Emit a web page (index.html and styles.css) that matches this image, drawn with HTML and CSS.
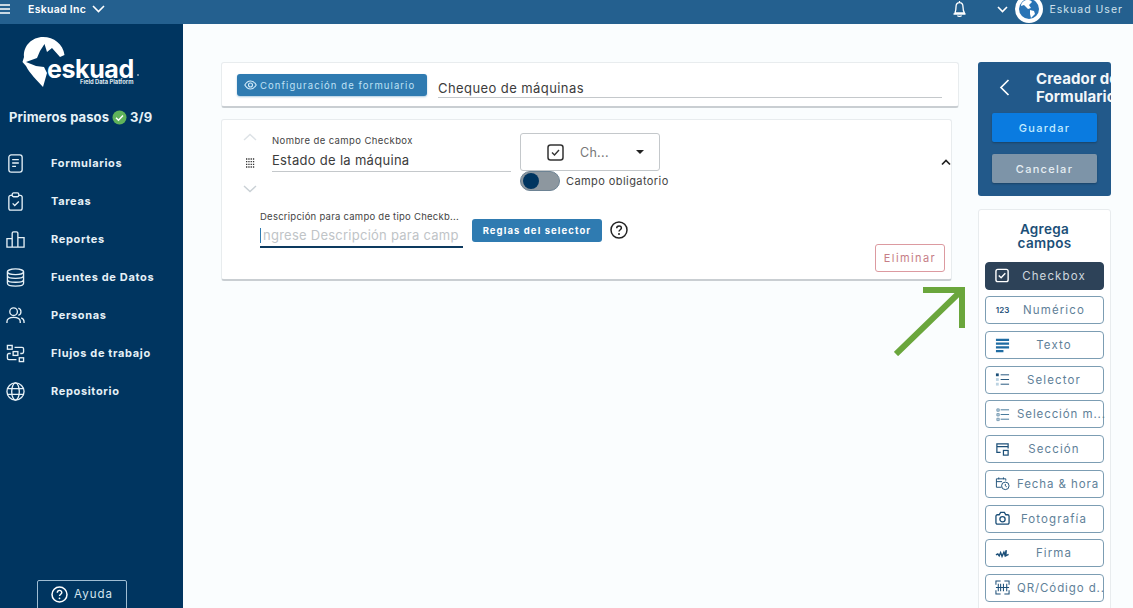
FILE: index.html
```html
<!DOCTYPE html>
<html lang="es">
<head>
    <meta charset="UTF-8">
    <title>Eskuad - Creador de Formularios</title>
    <link rel="stylesheet" href="styles.css">
</head>
<body>

    <header class="topbar">
        <svg class="hamburger" width="11" height="10" viewBox="0 0 11 10"><path d="M0 1h10M0 5h10M0 9h10" stroke="#fff" stroke-width="1.4"/></svg>
        <span class="org-name">Eskuad Inc</span>
        <svg class="org-caret" width="13" height="8" viewBox="0 0 13 8"><path d="M1 1l5.5 5.5L12 1" fill="none" stroke="#fff" stroke-width="1.6"/></svg>
        <svg class="bell" width="17" height="18" viewBox="0 0 17 18"><path d="M8.5 1v1.5M4 13c.5-1.5 1-3 1-6 0-2.5 1.5-4.3 3.5-4.3S12 4.5 12 7c0 3 .5 4.5 1.5 6zM2.5 14h12M6.5 15.5c.5 1.3 3.500 1.3 4 0" fill="none" stroke="#fff" stroke-width="1.3"/></svg>
        <svg class="user-caret" width="11" height="7" viewBox="0 0 11 7"><path d="M1 1l4.5 4.5L10 1" fill="none" stroke="#fff" stroke-width="1.6"/></svg>
        <svg class="avatar" width="28" height="28" viewBox="0 0 28 28">
            <circle cx="14" cy="14" r="14" fill="#fff"/>
            <circle cx="14" cy="14" r="10" fill="#2a74b5"/>
            <path d="M9 6c3-2 7-1 8 1l-3 3 2 3-3 1-4-4-3 1c0-2 1-4 3-5zM15 15l4 1 1 3-4 4-1-4z" fill="#fff"/>
        </svg>
        <span class="user-name">Eskuad User</span>
    </header>

    <div class="layout">
        <aside class="sidebar">
            <svg class="logo" width="150" height="64" viewBox="0 0 150 64">
                <path d="M43 13C54 13 63 20 64.5 31L60 33 52 24 47 28 44.500 20 40 27 37 34 26 38 36 42 44 43 47 49 43 63C37 56 30 50 26 42L22.500 38 24 33C23 22 32 13 43 13z" fill="#fff"/>
                <text class="logo-word" x="47" y="54">eskuad</text>
                <text class="logo-tag" x="80" y="60">Field Data Platform</text>
                <circle cx="138" cy="51" r=".8" fill="#fff"/>
            </svg>

            <div class="first-steps">
                Primeros pasos
                <svg width="15" height="15" viewBox="0 0 15 15"><circle cx="7.5" cy="7.5" r="7" fill="#5fb35a"/><path d="M4 7.8l2.500 2.4L11 5.5" fill="none" stroke="#fff" stroke-width="1.5"/></svg>
                3/9
            </div>

            <nav class="menu">
                <a class="menu-item" href="#">
                    <svg viewBox="0 0 20 20"><rect x="3" y="1" width="14" height="18" rx="2.5"/><path d="M6.5 6h7M6.5 9.5h7M6.5 13h4"/></svg>
                    Formularios
                </a>
                <a class="menu-item" href="#">
                    <svg viewBox="0 0 20 20"><path d="M6.5 3.500H5a2 2 0 0 0-2 2V17a2 2 0 0 0 2 2h10a2 2 0 0 0 2-2V5.500a2 2 0 0 0-2-2h-1.500"/><rect x="6.5" y="1" width="7" height="4" rx="1.5"/><path d="M7 12l2.200 2.200L13.500 10"/></svg>
                    Tareas
                </a>
                <a class="menu-item" href="#">
                    <svg viewBox="0 0 20 20"><path d="M1 18V9h5.500v9zM6.500 18V3.500a1.500 1.500 0 0 1 1.500-1.500h3a1.500 1.500 0 0 1 1.500 1.500V18zM12.500 8H19v10h-6.500zM1 18h18"/></svg>
                    Reportes
                </a>
                <a class="menu-item" href="#">
                    <svg viewBox="0 0 20 20"><ellipse cx="10" cy="4" rx="8.5" ry="3"/><path d="M1.500 4v12c0 1.700 3.800 3 8.500 3s8.500-1.300 8.500-3V4M1.500 8c0 1.700 3.800 3 8.500 3s8.500-1.300 8.500-3M1.500 12c0 1.700 3.800 3 8.500 3s8.500-1.300 8.500-3"/></svg>
                    Fuentes de Datos
                </a>
                <a class="menu-item" href="#">
                    <svg viewBox="0 0 20 20"><circle cx="8" cy="6" r="4"/><path d="M1 18v-1.500C1 13.500 3.500 12 8 12s7 1.500 7 4.500V18M13 2.200a4 4 0 0 1 0 7.600M16 12.500c2 .7 3 2.200 3 4V18"/></svg>
                    Personas
                </a>
                <a class="menu-item" href="#">
                    <svg viewBox="0 0 20 20"><rect x="1.5" y="1.5" width="5" height="4"/><rect x="7.5" y="8" width="5" height="4"/><rect x="14" y="14.5" width="4.5" height="4"/><path d="M9 3.500h8a1.500 1.500 0 0 1 1.500 1.500v3.500a1.500 1.500 0 0 1-1.500 1.500h-2M5 10H3a1.500 1.500 0 0 0-1.500 1.500V15A1.500 1.500 0 0 0 3 16.500h8"/></svg>
                    Flujos de trabajo
                </a>
                <a class="menu-item" href="#">
                    <svg viewBox="0 0 20 20"><circle cx="10" cy="10" r="9"/><ellipse cx="10" cy="10" rx="4" ry="9"/><path d="M1.500 7h17M1.500 13h17"/></svg>
                    Repositorio
                </a>
            </nav>

            <button class="help-btn">
                <svg width="17" height="17" viewBox="0 0 17 17"><circle cx="8.5" cy="8.5" r="7.5" fill="none" stroke="#fff" stroke-width="1.5"/><path d="M6.300 6.700c0-3 4.500-3 4.500-.2 0 1.700-2.300 1.700-2.300 3.500" fill="none" stroke="#fff" stroke-width="1.4"/><circle cx="8.5" cy="12.3" r=".9" fill="#fff"/></svg>
                Ayuda
            </button>
        </aside>

        <main class="builder">
            <section class="forms">
                <div class="card form-head">
                    <button class="config-btn">
                        <svg width="13" height="10" viewBox="0 0 13 10"><path d="M.8 5C3.800-.3 9.200-.3 12.200 5 9.200 10.300 3.800 10.300.8 5z" fill="none" stroke="#d5ecfa" stroke-width="1.1"/><circle cx="6.5" cy="5" r="2" fill="none" stroke="#d5ecfa" stroke-width="1.1"/></svg>
                        Configuración de formulario
                    </button>
                    <div class="form-title">Chequeo de máquinas</div>
                </div>

                <div class="card field-card">
                    <div class="field-row">
                        <div class="handle">
                            <svg width="14" height="8" viewBox="0 0 14 8"><path d="M1 7l6-5.500L13 7" fill="none" stroke="#dde2e6" stroke-width="1.4"/></svg>
                            <svg width="9" height="10" viewBox="0 0 9 10"><path d="M0 1h9M0 3.700h9M0 6.300h9M0 9h9" stroke="#333" stroke-width="1.3" stroke-dasharray="1.300 1"/></svg>
                            <svg width="14" height="8" viewBox="0 0 14 8"><path d="M1 1l6 5.500L13 1" fill="none" stroke="#c9d0d5" stroke-width="1.4"/></svg>
                        </div>
                        <div class="name-field">
                            <label>Nombre de campo Checkbox</label>
                            <div class="name-value">Estado de la máquina</div>
                        </div>
                        <div class="type-col">
                            <div class="type-select">
                                <svg width="17" height="17" viewBox="0 0 17 17"><rect x="1" y="1" width="15" height="15" rx="2.5" fill="none" stroke="#333" stroke-width="1.5"/><path d="M5 8.500l2.500 2.500L12 6" fill="none" stroke="#333" stroke-width="1.4"/></svg>
                                <span class="type-text">Ch...</span>
                                <span class="type-caret"></span>
                            </div>
                            <div class="required">
                                <span class="switch"><span class="knob"></span></span>
                                Campo obligatorio
                            </div>
                        </div>
                        <svg class="collapse" width="10" height="7" viewBox="0 0 10 7"><path d="M1 5.500L5 1.500l4 4" fill="none" stroke="#222" stroke-width="1.7"/></svg>
                    </div>
                    <div class="desc-row">
                        <div class="desc-field">
                            <label class="desc-label">Descripción para campo de tipo Checkb...</label>
                            <div class="desc-input"><span class="cursor"></span>ngrese Descripción para camp</div>
                        </div>
                        <button class="rules-btn">Reglas del selector</button>
                        <svg class="rules-help" width="18" height="18" viewBox="0 0 18 18"><circle cx="9" cy="9" r="8" fill="none" stroke="#222" stroke-width="1.5"/><path d="M6.700 7.200c0-3 4.700-3 4.700-.2 0 1.800-2.400 1.700-2.400 3.600" fill="none" stroke="#222" stroke-width="1.5"/><circle cx="9" cy="13" r="1" fill="#222"/></svg>
                        <button class="delete-btn">Eliminar</button>
                    </div>
                </div>
            </section>

            <section class="tools">
                <div class="creator">
                    <div class="creator-head">
                        <svg width="11" height="17" viewBox="0 0 11 17"><path d="M9.500 1L2 8.500 9.500 16" fill="none" stroke="#fff" stroke-width="1.7"/></svg>
                        <h1>Creador de<br>Formularios</h1>
                    </div>
                    <button class="save-btn">Guardar</button>
                    <button class="cancel-btn">Cancelar</button>
                </div>

                <div class="palette">
                    <h2>Agrega<br>campos</h2>
                    <button class="field-btn active">
                        <svg viewBox="0 0 16 16"><rect x="1" y="1.5" width="13" height="13" rx="2" stroke="#fff" stroke-width="1.5"/><path d="M4 8l2.500 2.500L11 5.500" stroke="#fff" stroke-width="1.5"/></svg>
                        <span>Checkbox</span>
                    </button>
                    <button class="field-btn">
                        <span class="num-icon">123</span>
                        <span>Numérico</span>
                    </button>
                    <button class="field-btn">
                        <svg viewBox="0 0 16 16"><path d="M1 2h14M1 6h14M1 10h14M1 14h8" stroke="#1f6ca3" stroke-width="2.2"/></svg>
                        <span>Texto</span>
                    </button>
                    <button class="field-btn">
                        <svg viewBox="0 0 16 16"><path d="M6 3h9M6 8h9M6 13h9"/><rect x="1" y="1.5" width="3" height="3" fill="#1c4f78" stroke="none"/><rect x="1" y="6.5" width="3" height="3" fill="#bcd3e2" stroke="none"/><rect x="1" y="11.5" width="3" height="3" fill="#bcd3e2" stroke="none"/></svg>
                        <span>Selector</span>
                    </button>
                    <button class="field-btn">
                        <svg viewBox="0 0 16 16"><path d="M6 3h9M6 8h9M6 13h9" stroke="#3f7396"/><path d="M2 2h2.500v2.500H2zM2 7h2.500v2.500H2zM2 12h2.500v2.500H2z" fill="#bcd3e2" stroke="#7c9db3"/></svg>
                        <span class="long">Selección m...</span>
                    </button>
                    <button class="field-btn">
                        <svg viewBox="0 0 16 16"><path d="M6 11H2V2h12v5M2 5h12" stroke-width="1.3"/><rect x="9" y="9" width="5" height="5" stroke-width="1.3"/></svg>
                        <span>Sección</span>
                    </button>
                    <button class="field-btn">
                        <svg viewBox="0 0 16 16"><path d="M7 12H1.500V3h10v2M1.500 6h6M4 1.500v2M9 1.500v2"/><circle cx="11" cy="10.5" r="4"/><path d="M11 8.500v2l1.500 1"/></svg>
                        <span class="long">Fecha &amp; hora</span>
                    </button>
                    <button class="field-btn">
                        <svg viewBox="0 0 16 16"><path d="M1 5.500a1.500 1.500 0 0 1 1.500-1.500H4.500L6 1.500h4L11.500 4h2A1.500 1.500 0 0 1 15 5.500v7a1.500 1.500 0 0 1-1.500 1.500h-11A1.500 1.500 0 0 1 1 12.500z" stroke-width="1.4"/><circle cx="8" cy="8.800" r="2.800" stroke-width="1.4"/></svg>
                        <span>Fotografía</span>
                    </button>
                    <button class="field-btn">
                        <svg viewBox="0 0 16 16"><path d="M1 9.500l2-1 1.500 2L6 7l1.500 4 2-4.500 1 3 1.500-5-.5 6 3-1.500" stroke-width="1.5"/></svg>
                        <span>Firma</span>
                    </button>
                    <button class="field-btn">
                        <svg viewBox="0 0 16 16"><path d="M1 5V1h5M10 1h5v4M1 11v4h5M15 11v4h-5M3.500 4v8M6 4v8M9 4v8M12.500 4v8M1 8h14" stroke-width="1.1"/></svg>
                        <span class="long">QR/Código d..</span>
                    </button>
                </div>
            </section>

            <svg class="hint-arrow" width="72" height="72" viewBox="0 0 72 72">
                <path d="M2 70L66 8M29 6h39v38" fill="none" stroke="#6aa63c" stroke-width="6"/>
            </svg>
        </main>
    </div>

</body>
</html>
```
FILE: styles.css
```css
* {
    box-sizing: border-box;
}
html, body {
    height: 100%;
}
body {
    margin: 0;
    overflow: hidden;
    font-family: Inter, "Liberation Sans", sans-serif;
    background: #fafdfe;
    color: #333;
}
button {
    font-family: inherit;
    cursor: pointer;
}
label {
    display: block;
    font-size: 9.5px;
    letter-spacing: .4px;
    color: #444;
    white-space: nowrap;
}

/* top bar */
.topbar {
    height: 24px;
    padding-bottom: 6px;
    background: #24608f;
    color: #fff;
    display: flex;
    align-items: center;
    overflow: hidden;
}
.hamburger {
    flex: none;
}
.org-name {
    margin-left: 17px;
    font-size: 10.5px;
    font-weight: 600;
    letter-spacing: .3px;
}
.org-caret {
    margin-left: 6px;
}
.bell {
    margin-left: auto;
}
.user-caret {
    margin-left: 29px;
}
.avatar {
    margin-left: 7px;
    flex: none;
}
.user-name {
    margin: 0 10px 0 6px;
    font-size: 10.5px;
    letter-spacing: 1px;
    color: #cfe0ec;
}

.layout {
    display: flex;
    height: 584px;
}

/* sidebar */
.sidebar {
    width: 183px;
    flex: none;
    background: #003560;
    color: #fff;
    display: flex;
    flex-direction: column;
}
.logo {
    display: block;
    flex: none;
}
.logo-word {
    font-size: 25px;
    font-weight: 700;
    fill: #fff;
    letter-spacing: -.4px;
}
.logo-tag {
    font-size: 5.8px;
    font-weight: 700;
    fill: #dfe8ef;
}
.first-steps {
    margin: 21px 0 0 9px;
    display: flex;
    align-items: center;
    gap: 3px;
    font-size: 13px;
    font-weight: 700;
    letter-spacing: .1px;
    color: #e6f1f7;
    white-space: nowrap;
}
.menu {
    margin-top: 19px;
    display: flex;
    flex-direction: column;
}
.menu-item {
    height: 38px;
    display: flex;
    align-items: center;
    gap: 26px;
    padding-left: 6px;
    color: #e6f1f7;
    font-size: 11px;
    font-weight: 700;
    letter-spacing: .65px;
    text-decoration: none;
}
.menu-item svg {
    width: 19px;
    height: 19px;
    flex: none;
    fill: none;
    stroke: #e6f1f7;
    stroke-width: 1.4;
}
.help-btn {
    margin: auto 0 -4px 37px;
    width: 90px;
    height: 32px;
    background: transparent;
    border: 1px solid #9fbdd3;
    border-radius: 2px;
    color: #d6e5ef;
    font-size: 11.5px;
    letter-spacing: 1px;
    display: flex;
    align-items: center;
    justify-content: center;
    gap: 6px;
    padding: 0 0 4px;
}

/* main area */
.builder {
    position: relative;
    flex: 1;
    display: flex;
    padding: 38px 22px 0 38px;
    gap: 19px;
    overflow: hidden;
}
.forms {
    width: 738px;
    flex: none;
    display: flex;
    flex-direction: column;
    gap: 11px;
}
.card {
    background: #fff;
    border: 1px solid #e8ecee;
    border-bottom: 2px solid #c9ced2;
    border-radius: 3px;
}
.form-head {
    height: 46px;
    display: flex;
    align-items: flex-start;
    padding: 11px 16px 0 15px;
    gap: 11px;
}
.config-btn {
    width: 190px;
    height: 22px;
    flex: none;
    background: #2f7bb1;
    border: none;
    border-radius: 3px;
    color: #bfe2f6;
    font-size: 9.5px;
    letter-spacing: 1.08px;
    display: flex;
    align-items: center;
    gap: 3px;
    padding: 0 0 0 7px;
    white-space: nowrap;
    box-shadow: 0 1px 2px rgba(47, 123, 177, 0.4);
}
.form-title {
    flex: 1;
    margin-top: 6px;
    height: 18px;
    border-bottom: 1.5px solid #c4c8cb;
    font-size: 13px;
    line-height: 16px;
    letter-spacing: .42px;
    color: #3c3c3c;
}
.field-card {
    width: 731px;
    height: 162px;
    padding-top: 13px;
    display: flex;
    flex-direction: column;
}
.field-row {
    display: flex;
    align-items: flex-start;
    padding-left: 19px;
}
.handle {
    width: 18px;
    height: 60px;
    flex: none;
    display: flex;
    flex-direction: column;
    align-items: center;
    justify-content: space-between;
}
.name-field {
    width: 239px;
    margin-left: 13px;
    height: 39px;
    padding-top: 2px;
    border-bottom: 1.5px solid #c4c8cb;
}
.name-value {
    margin-top: 6px;
    font-size: 13px;
    letter-spacing: .3px;
    color: #3c3c3c;
}
.type-col {
    margin-left: 9px;
    width: 155px;
}
.type-select {
    width: 140px;
    height: 38px;
    background: #fff;
    border: 1px solid #c4c8cb;
    border-radius: 3px;
    display: flex;
    align-items: center;
    padding-left: 26px;
}
.type-text {
    margin-left: 16px;
    font-size: 12.5px;
    color: #777;
    letter-spacing: .3px;
}
.type-caret {
    margin-left: auto;
    margin-right: 15px;
    border-left: 4px solid transparent;
    border-right: 4px solid transparent;
    border-top: 4px solid #222;
}
.required {
    display: flex;
    align-items: center;
    gap: 6px;
    font-size: 11px;
    letter-spacing: .42px;
    color: #444;
    white-space: nowrap;
}
.switch {
    width: 40px;
    height: 20px;
    flex: none;
    background: #8d979f;
    border: 1px solid #6d8394;
    border-radius: 10px;
    display: flex;
    align-items: center;
    padding-left: 2px;
}
.knob {
    width: 16px;
    height: 16px;
    background: #003560;
    border-radius: 50%;
}
.collapse {
    margin: 26px 0 0 auto;
}
.desc-row {
    flex: 1;
    display: flex;
    align-items: flex-start;
    padding: 18px 6px 7px 38px;
}
.desc-field {
    width: 203px;
    flex: none;
    height: 37px;
    border-bottom: 2px solid #0d3a5f;
}
.desc-label {
    letter-spacing: .25px;
}
.desc-input {
    margin-top: 5px;
    display: flex;
    align-items: center;
    font-size: 13px;
    letter-spacing: .25px;
    color: #c0c4c7;
    white-space: nowrap;
    overflow: hidden;
}
.cursor {
    width: 1px;
    height: 15px;
    margin-right: 2px;
    background: #2f7bb1;
    flex: none;
}
.rules-btn {
    margin: 8px 0 0 9px;
    width: 130px;
    height: 23px;
    flex: none;
    background: #2f7bb1;
    border: none;
    border-radius: 3px;
    color: #fff;
    font-size: 9.5px;
    font-weight: 700;
    letter-spacing: 1.1px;
    white-space: nowrap;
    padding: 0;
}
.rules-help {
    margin: 10px 0 0 8px;
    flex: none;
}
.delete-btn {
    margin-left: auto;
    align-self: flex-end;
    width: 70px;
    height: 28px;
    background: #fff;
    border: 1px solid #dc9aa0;
    border-radius: 3px;
    color: #c67e86;
    font-size: 11px;
    letter-spacing: 1.4px;
    padding: 0;
}

/* right column */
.tools {
    width: 133px;
    flex: none;
    display: flex;
    flex-direction: column;
    gap: 13px;
}
.creator {
    height: 134px;
    flex: none;
    background: #22598a;
    border-radius: 3px;
    padding: 0 14px;
    overflow: hidden;
}
.creator-head {
    height: 51px;
    display: flex;
    align-items: center;
    padding: 0 0 0 7px;
}
.creator-head svg {
    flex: none;
}
.creator-head h1 {
    margin: 0 0 0 26px;
    font-size: 15px;
    line-height: 18px;
    font-weight: 700;
    color: #f2f6f9;
    white-space: nowrap;
    letter-spacing: .1px;
}
.save-btn, .cancel-btn {
    display: block;
    width: 105px;
    height: 29px;
    border: none;
    border-radius: 2px;
    font-size: 11px;
    font-weight: 500;
    letter-spacing: 1.3px;
    box-shadow: 0 1px 2px rgba(0, 0, 0, 0.25);
    padding: 0;
}
.save-btn {
    background: #0a7be0;
    color: #c4ecff;
}
.cancel-btn {
    margin-top: 12px;
    background: #7d94a8;
    color: #e6eef3;
}
.palette {
    height: 420px;
    flex: none;
    background: #fff;
    border: 1px solid #e8ecee;
    border-radius: 3px;
    padding: 12px 6px 0;
    display: flex;
    flex-direction: column;
    gap: 6.7px;
}
.palette h2 {
    margin: 0 0 5px;
    font-size: 13.5px;
    line-height: 14px;
    font-weight: 600;
    letter-spacing: .3px;
    text-align: center;
    color: #1c4f78;
}
.field-btn {
    height: 28px;
    flex: none;
    background: #fff;
    border: 1.5px solid #7c9db3;
    border-radius: 4px;
    display: flex;
    align-items: center;
    padding: 0 5px 0 9px;
    color: #5f8199;
    font-size: 11.5px;
    letter-spacing: 1.1px;
    white-space: nowrap;
}
.field-btn svg {
    width: 15px;
    height: 15px;
    flex: none;
    fill: none;
    stroke: #1c4f78;
    stroke-width: 1;
}
.field-btn span:last-child {
    flex: 1;
    text-align: center;
}
.field-btn span.long {
    flex: none;
    margin-left: 7px;
    letter-spacing: .9px;
}
.field-btn.active {
    background: #2d4258;
    border-color: #2d4258;
    color: #cfd8df;
}
.num-icon {
    width: 15px;
    flex: none;
    font-size: 8px;
    font-weight: 600;
    letter-spacing: 0;
    color: #1c4f78;
}
.hint-arrow {
    position: absolute;
    left: 711px;
    top: 260px;
}
```
